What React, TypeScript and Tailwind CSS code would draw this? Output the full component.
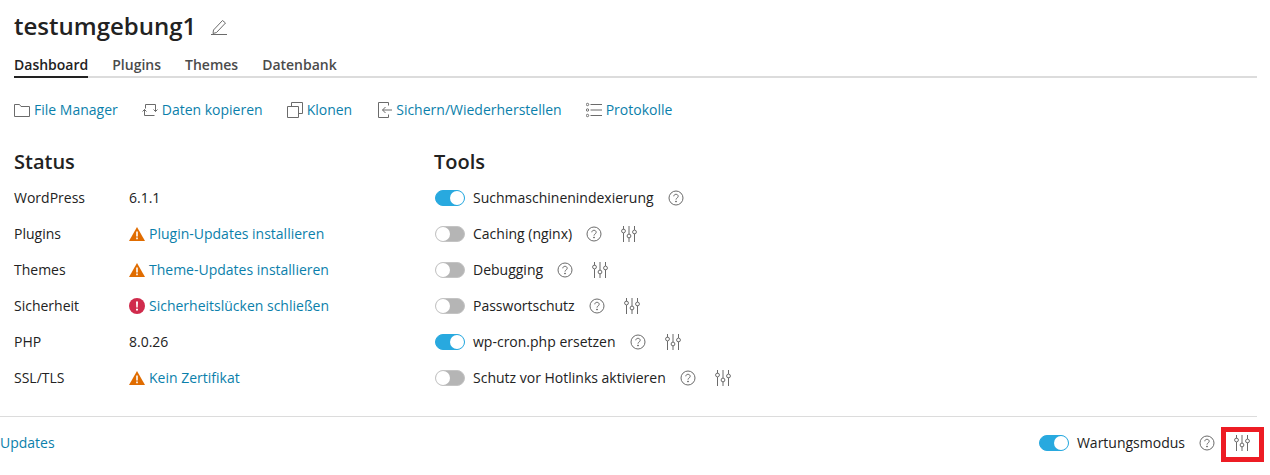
import React from 'react';

const Folder = () => (
  <svg width="16" height="16" viewBox="0 0 16 16" fill="none" stroke="#6b6b6b" className="shrink-0">
    <path d="M.5 14.500v-12h5l1.500 2h8.500v10z" />
  </svg>
);
const Copy = () => (
  <svg width="16" height="16" viewBox="0 0 16 16" fill="none" stroke="#6b6b6b" className="shrink-0">
    <path d="M3.500 6.500v-4h10v7M12.500 13.500H2.500v-6" />
    <path d="M11.500 7.500 13.500 9.500 15.500 7.500M.5 9.500 2.500 7.500 4.500 9.500" />
  </svg>
);
const Clone = () => (
  <svg width="16" height="16" viewBox="0 0 16 16" fill="none" stroke="#6b6b6b" className="shrink-0">
    <path d="M.5 4.500h11v11H.5z" />
    <path d="M4.500 4.500v-4h11v11h-4" />
  </svg>
);
const Restore = () => (
  <svg width="16" height="16" viewBox="0 0 16 16" fill="none" stroke="#6b6b6b" className="shrink-0">
    <path d="M12.500 3.500v-3h-10v15h10v-3" />
    <path d="M16 8H6.500M9.500 5 6.500 8l3 3" />
  </svg>
);
const ListIcon = () => (
  <svg width="16" height="16" viewBox="0 0 16 16" fill="none" stroke="#6b6b6b" className="shrink-0">
    <circle cx="1.500" cy="2.500" r="1.200" />
    <circle cx="1.500" cy="8" r="1.200" />
    <circle cx="1.500" cy="13.500" r="1.200" />
    <path d="M4.500 2.500H16M4.500 8H16M4.500 13.500H16" />
  </svg>
);
const Pencil = () => (
  <svg width="16" height="16" viewBox="0 0 16 16" fill="none" stroke="#6b6b6b">
    <path d="M2.500 11 11.500 1.500l3 2.500-9 9.500-3.500 1z" />
    <path d="M0 15.500h16" />
  </svg>
);
const Warn = () => (
  <svg width="16" height="16" viewBox="0 0 16 16" className="shrink-0">
    <path d="M8 1 16 15H0z" fill="#e06c00" />
    <path d="M7.200 5.500h1.600v5H7.200zM7.200 11.500h1.600v1.700H7.200z" fill="#fff" />
  </svg>
);
const Danger = () => (
  <svg width="16" height="16" viewBox="0 0 16 16" className="shrink-0">
    <circle cx="8" cy="8" r="8" fill="#d02b4c" />
    <path d="M7 3.500h2l-.3 6H7.300zM7 10.700h2v1.900H7z" fill="#fff" />
  </svg>
);
const Help = () => (
  <svg width="16" height="16" viewBox="0 0 16 16" fill="none" stroke="#6b6b6b" className="shrink-0">
    <circle cx="8" cy="8" r="7" />
    <path d="M5.800 6.300C5.800 5 6.800 4.300 8 4.300s2.200.8 2.200 2c0 1.700-2.200 1.600-2.200 3.300" />
    <circle cx="8" cy="11.500" r=".5" fill="#6b6b6b" />
  </svg>
);
const Sliders = () => (
  <svg width="16" height="16" viewBox="0 0 16 16" fill="none" stroke="#6b6b6b" className="shrink-0">
    <path d="M2.500 0v3.500M2.500 7v9M8 0v8M8 11.500V16M13.500 0v4M13.500 7.500V16" />
    <circle cx="2.500" cy="5" r="1.900" />
    <circle cx="8" cy="10" r="1.900" />
    <circle cx="13.500" cy="6" r="1.900" />
  </svg>
);

const Toggle = ({ on }: { on: boolean }) =>
  on ? (
    <span className="flex h-4 w-[30px] shrink-0 items-center justify-end rounded-full border border-[#28a9df] bg-[#28a9df]">
      <span className="h-[14px] w-[14px] rounded-full bg-white" />
    </span>
  ) : (
    <span className="flex h-4 w-[30px] shrink-0 items-center rounded-full border border-[#c4c4c4] bg-[#b5b5b5]">
      <span className="h-[14px] w-[14px] rounded-full bg-white" />
    </span>
  );

const Link = ({ children }: { children: React.ReactNode }) => (
  <span className="text-[#0b7fab]">{children}</span>
);

const actions = [
  { icon: <Folder />, label: 'File Manager' },
  { icon: <Copy />, label: 'Daten kopieren' },
  { icon: <Clone />, label: 'Klonen' },
  { icon: <Restore />, label: 'Sichern/Wiederherstellen' },
  { icon: <ListIcon />, label: 'Protokolle' },
];

const status = [
  { label: 'WordPress', value: '6.1.1' },
  { label: 'Plugins', icon: <Warn />, link: 'Plugin-Updates installieren' },
  { label: 'Themes', icon: <Warn />, link: 'Theme-Updates installieren' },
  { label: 'Sicherheit', icon: <Danger />, link: 'Sicherheitslücken schließen' },
  { label: 'PHP', value: '8.0.26' },
  { label: 'SSL/TLS', icon: <Warn />, link: 'Kein Zertifikat' },
];

const tools = [
  { label: 'Suchmaschinenindexierung', on: true, settings: false },
  { label: 'Caching (nginx)', on: false, settings: true },
  { label: 'Debugging', on: false, settings: true },
  { label: 'Passwortschutz', on: false, settings: true },
  { label: 'wp-cron.php ersetzen', on: true, settings: true },
  { label: 'Schutz vor Hotlinks aktivieren', on: false, settings: true },
];

export default function App() {
  return (
    <div className="relative h-[475px] w-[1270px] overflow-hidden bg-white font-['Open_Sans',sans-serif] text-sm text-[#222]">
      <div className="w-[1257px]">
        <div className="pl-[14px]">
          <div className="flex h-[52px] items-center">
            <h1 className="text-2xl font-semibold leading-8">testumgebung1</h1>
            <span className="ml-[15px] mt-[2px]"><Pencil /></span>
          </div>
          <div className="flex h-[26px] gap-6 border-b-2 border-[#dcdcdc] font-semibold">
            <span className="-mb-[2px] h-[26px] border-b-2 border-[#222] leading-[26px]">Dashboard</span>
            <span className="leading-[26px] text-[#4b4b4b]">Plugins</span>
            <span className="leading-[26px] text-[#4b4b4b]">Themes</span>
            <span className="leading-[26px] text-[#4b4b4b]">Datenbank</span>
          </div>
          <div className="mt-[22px] flex h-5 items-center gap-6">
            {actions.map((a) => (
              <span key={a.label} className="flex items-center gap-1">
                {a.icon}
                <Link>{a.label}</Link>
              </span>
            ))}
          </div>
          <div className="mt-[30px] flex h-[266px]">
            <div className="w-[420px]">
              <h2 className="h-[30px] text-xl font-semibold leading-[24px]">Status</h2>
              {status.map((s) => (
                <div key={s.label} className="flex h-9 items-center">
                  <span className="w-[115px]">{s.label}</span>
                  {s.value ? (
                    <span>{s.value}</span>
                  ) : (
                    <span className="flex items-center gap-1">
                      {s.icon}
                      <Link>{s.link}</Link>
                    </span>
                  )}
                </div>
              ))}
            </div>
            <div className="flex-1">
              <h2 className="h-[30px] text-xl font-semibold leading-[24px]">Tools</h2>
              {tools.map((t) => (
                <div key={t.label} className="flex h-9 items-center pl-px">
                  <Toggle on={t.on} />
                  <span className="ml-2">{t.label}</span>
                  <span className="ml-[14px]"><Help /></span>
                  {t.settings && <span className="ml-[19px]"><Sliders /></span>}
                </div>
              ))}
            </div>
          </div>
        </div>
        <div className="flex h-[54px] items-center justify-between border-t border-[#dcdcdc] pb-[1px]">
          <Link>Updates</Link>
          <div className="flex items-center">
            <Toggle on />
            <span className="ml-2">Wartungsmodus</span>
            <span className="ml-[14px]"><Help /></span>
            <span className="ml-[19px] mr-[7px]"><Sliders /></span>
          </div>
        </div>
      </div>
      <div className="absolute left-[1221px] top-[427px] h-[35px] w-[43px] border-[5px] border-[#ed1c24]" />
    </div>
  );
}
